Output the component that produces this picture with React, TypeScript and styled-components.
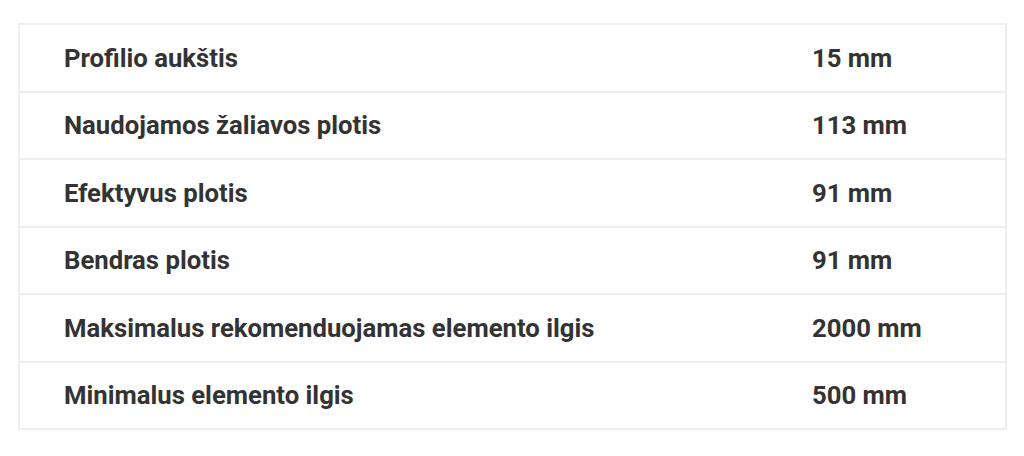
import React from 'react';
import styled, { createGlobalStyle } from 'styled-components';

interface SpecRow {
  label: string;
  value: string;
}

const specs: SpecRow[] = [
  { label: 'Profilio aukštis', value: '15 mm' },
  { label: 'Naudojamos žaliavos plotis', value: '113 mm' },
  { label: 'Efektyvus plotis', value: '91 mm' },
  { label: 'Bendras plotis', value: '91 mm' },
  { label: 'Maksimalus rekomenduojamas elemento ilgis', value: '2000 mm' },
  { label: 'Minimalus elemento ilgis', value: '500 mm' },
];

const GlobalStyle = createGlobalStyle`
  html, body {
    margin: 0;
    padding: 0;
    background: #fff;
  }
  body {
    font-family: Roboto, 'Liberation Sans', sans-serif;
  }
`;

const Page = styled.div`
  padding: 23px 17px 0 18px;
`;

const SpecTable = styled.div`
  border: 2px solid #eeeeee;
  display: grid;
  grid-template-columns: 748px 1fr;
`;

const Cell = styled.div<{ $first: boolean }>`
  height: 65.5px;
  display: flex;
  align-items: center;
  padding-left: 44px;
  border-top: ${props => (props.$first ? 'none' : '2px solid #eeeeee')};
  color: #333333;
  font-size: 25.7px;
  font-weight: 700;
`;

export default function App() {
  return (
    <>
      <GlobalStyle />
      <Page>
        <SpecTable>
          {specs.map((row, i) => (
            <React.Fragment key={row.label}>
              <Cell $first={i === 0}>{row.label}</Cell>
              <Cell $first={i === 0}>{row.value}</Cell>
            </React.Fragment>
          ))}
        </SpecTable>
      </Page>
    </>
  );
}
